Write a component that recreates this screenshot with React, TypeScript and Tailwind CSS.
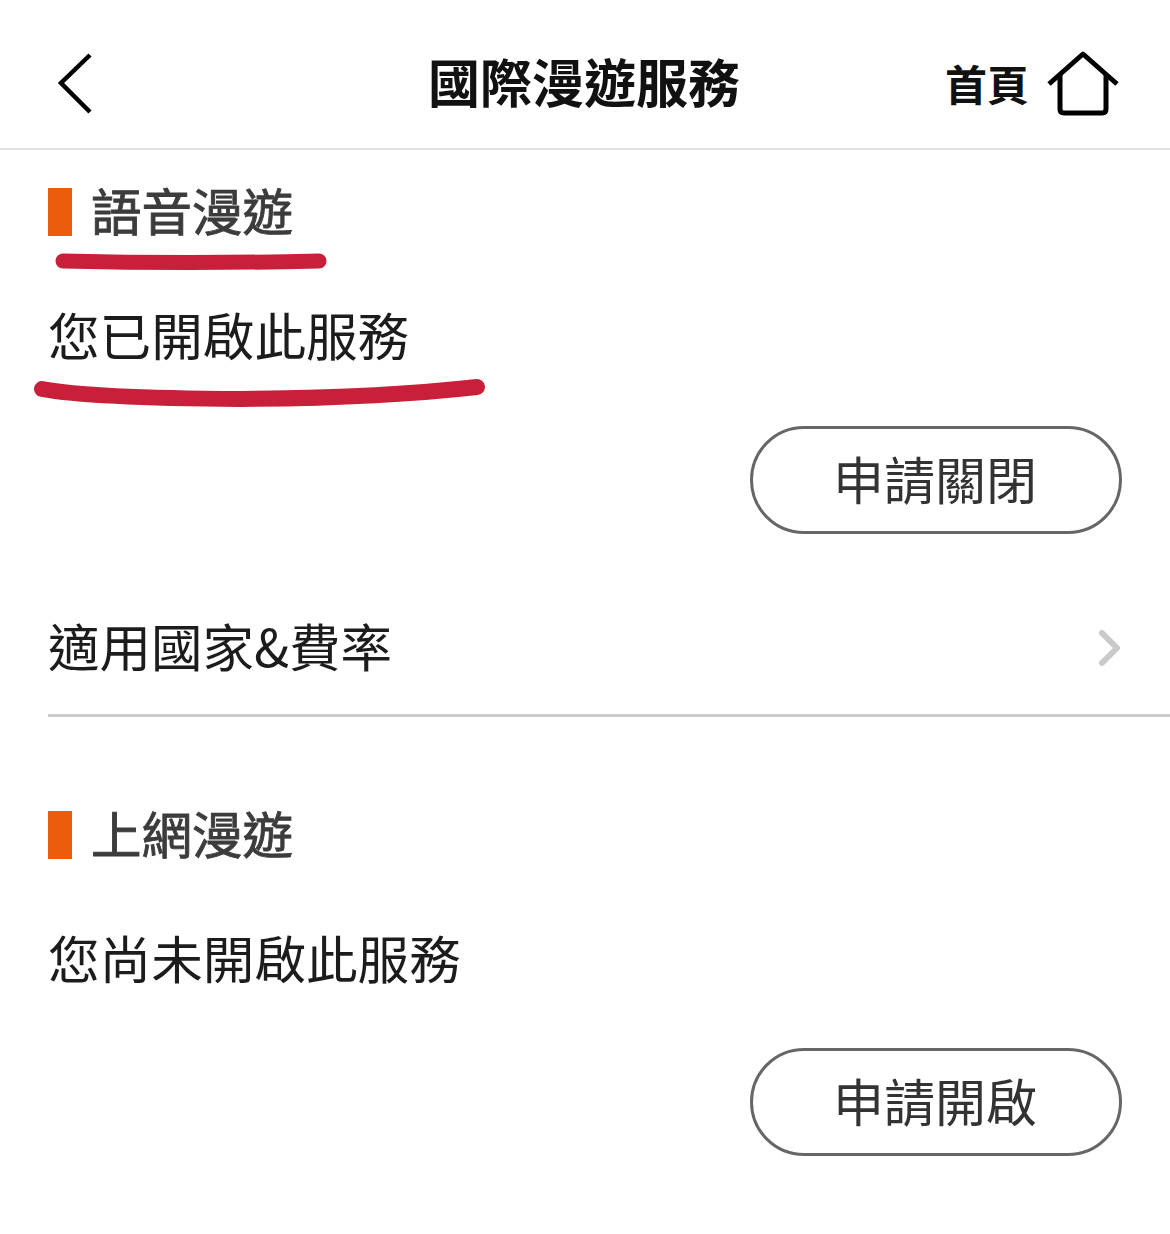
import React from "react";

const cjk = "font-['Noto_Sans_CJK_TC','Noto_Sans_CJK_SC',sans-serif]";

const SectionTitle = ({ children }: { children: React.ReactNode }) => (
  <div className="flex items-center gap-[19px] h-12">
    <span className="w-6 h-12 bg-[#ea5b0c]" />
    <h2 className="text-[50.5px] leading-[48px] mt-[-6px] text-[#3c3c3c] [-webkit-text-stroke:0.9px_#3c3c3c]">{children}</h2>
  </div>
);

const PillButton = ({ label }: { label: string }) => (
  <div className="flex justify-end pr-12">
    <button className="w-[372px] h-[108px] rounded-full border-[3px] border-[#666666] text-[51px] leading-none text-[#333333] bg-white pb-[3px] pr-[2px]">
      {label}
    </button>
  </div>
);

export default function App() {
  return (
    <div className={`relative w-[1170px] h-[1234px] bg-white overflow-hidden ${cjk}`}>
      {/* Header */}
      <header className="h-[150px] pt-[22px] border-b-2 border-[#e2e2e2] flex items-center justify-between pl-[56px] pr-[51px] relative">
        <svg width="40" height="64" viewBox="0 0 40 64" fill="none" stroke="#000" strokeWidth="4.5">
          <path d="M34 2 L5 30 L34 59" />
        </svg>
        <h1 className="absolute left-0 right-0 text-center text-[52px] leading-none font-bold text-[#111] mt-[-8px] pr-[2px]">
          國際漫遊服務
        </h1>
        <div className="flex items-center gap-[18px]">
          <span className="text-[42px] leading-none font-bold text-[#111] mt-[-4px]">首頁</span>
          <svg width="72" height="68" viewBox="0 0 72 68" fill="none" stroke="#000" strokeWidth="5" strokeLinejoin="round">
            <path d="M2 33 L36 3 L70 33" />
            <path d="M13 24 V58 Q13 62 17 62 H55 Q59 62 59 58 V24" />
          </svg>
        </div>
      </header>

      {/* Voice roaming */}
      <section className="pl-12 pt-[38px]">
        <SectionTitle>語音漫遊</SectionTitle>
        <p className="mt-[72px] text-[51.6px] leading-[52px] text-[#1c1c1c]">您已開啟此服務</p>
      </section>
      <div className="mt-[66px]">
        <PillButton label="申請關閉" />
      </div>

      {/* Rates row */}
      <div className="mt-[63px] ml-12 h-[120px] flex items-start justify-between border-b-[3px] border-[#cccccc] pr-12">
        <span className="mt-[22px] text-[51.5px] leading-[52px] text-[#1c1c1c]">適用國家&amp;費率</span>
        <svg className="mt-[32px]" width="24" height="38" viewBox="0 0 24 38" fill="none" stroke="#c9c9c9" strokeWidth="6" strokeLinecap="round" strokeLinejoin="round">
          <path d="M4 4 L19 19 L4 34" />
        </svg>
      </div>

      {/* Data roaming */}
      <section className="pl-12 mt-[94px]">
        <SectionTitle>上網漫遊</SectionTitle>
        <p className="mt-[72px] text-[51.6px] leading-[52px] text-[#1c1c1c]">您尚未開啟此服務</p>
      </section>
      <div className="mt-[65px]">
        <PillButton label="申請開啟" />
      </div>

      {/* Hand-drawn red underlines */}
      <svg className="absolute left-0 top-0 pointer-events-none" width="1170" height="420" fill="none" stroke="#c8203a" strokeLinecap="round">
        <path d="M63 261 Q190 264 319 261" strokeWidth="15" />
        <path d="M42 389 Q90 398 240 399 Q380 398 477 387" strokeWidth="16" />
      </svg>
    </div>
  );
}
